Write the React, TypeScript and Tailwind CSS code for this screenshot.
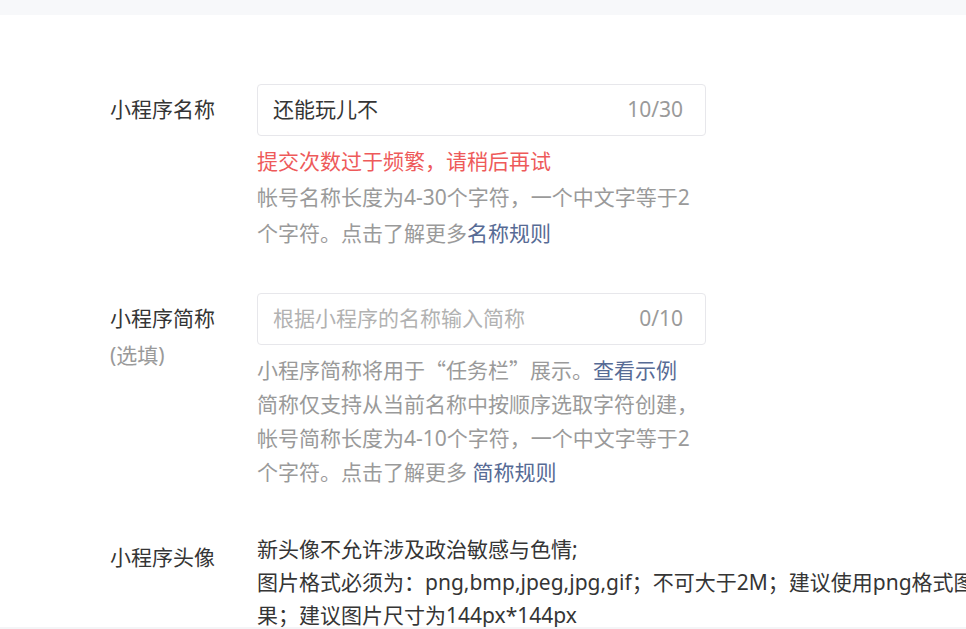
import React from "react";

const font = { fontFamily: '"Noto Sans", "Noto Sans CJK SC", sans-serif' };

function Q({ children }: { children: React.ReactNode }) {
  return <span style={{ fontFamily: '"Noto Sans CJK SC", sans-serif' }}>{children}</span>;
}

export default function App() {
  return (
    <div
      className="w-[966px] h-[629px] overflow-hidden bg-white flex flex-col text-[21px] text-[#353535]"
      style={font}
    >
      <div className="h-[15px] shrink-0 bg-[#f7f8fa]" />
      <div className="flex-1 overflow-hidden pl-[110px] pt-[69px]">
        {/* Row 1 */}
        <div className="flex">
          <div className="w-[147px] shrink-0">
            <div className="h-[52px] flex items-center">小程序名称</div>
          </div>
          <div className="w-[449px]">
            <div className="h-[52px] border border-[#e7e7eb] rounded-[4px] flex items-center justify-between pl-[15px] pr-[22px]">
              <span>还能玩儿不</span>
              <span className="text-[#9a9a9a]">10/30</span>
            </div>
            <div className="mt-[7px] leading-[36px] text-[#ee5a5a]">提交次数过于频繁，请稍后再试</div>
            <div className="leading-[36px] text-[#9a9a9a]">
              帐号名称长度为4-30个字符，一个中文字等于2个字符。点击了解更多
              <span className="text-[#576b95]">名称规则</span>
            </div>
          </div>
        </div>

        {/* Row 2 */}
        <div className="flex mt-[42px]">
          <div className="w-[147px] shrink-0">
            <div className="h-[52px] flex items-center">小程序简称</div>
            <div className="leading-[20px] text-[#9a9a9a]">(选填)</div>
          </div>
          <div className="w-[449px]">
            <div className="h-[52px] border border-[#e7e7eb] rounded-[4px] flex items-center justify-between pl-[15px] pr-[22px]">
              <span className="text-[#b2b2b2]">根据小程序的名称输入简称</span>
              <span className="text-[#9a9a9a]">0/10</span>
            </div>
            <div className="mt-[7px] leading-[34px] text-[#9a9a9a]">
              <div>
                小程序简称将用于<Q>“</Q>任务栏<Q>”</Q>展示。
                <span className="text-[#576b95]">查看示例</span>
              </div>
              <div>
                简称仅支持从当前名称中按顺序选取字符创建，帐号简称长度为4-10个字符，一个中文字等于2个字符。点击了解更多{" "}
                <span className="text-[#576b95]">简称规则</span>
              </div>
            </div>
          </div>
        </div>

        {/* Row 3 */}
        <div className="flex mt-[44px]">
          <div className="w-[147px] shrink-0 pt-[8px] leading-[33px]">小程序头像</div>
          <div className="leading-[33px] whitespace-nowrap">
            <div>新头像不允许涉及政治敏感与色情;</div>
            <div>图片格式必须为：png,bmp,jpeg,jpg,gif；不可大于2M；建议使用png格式图片，以保持最佳效</div>
            <div>果；建议图片尺寸为144px*144px</div>
          </div>
        </div>
      </div>
      <div className="h-[2px] shrink-0 bg-[#f4f5f7]" />
    </div>
  );
}
